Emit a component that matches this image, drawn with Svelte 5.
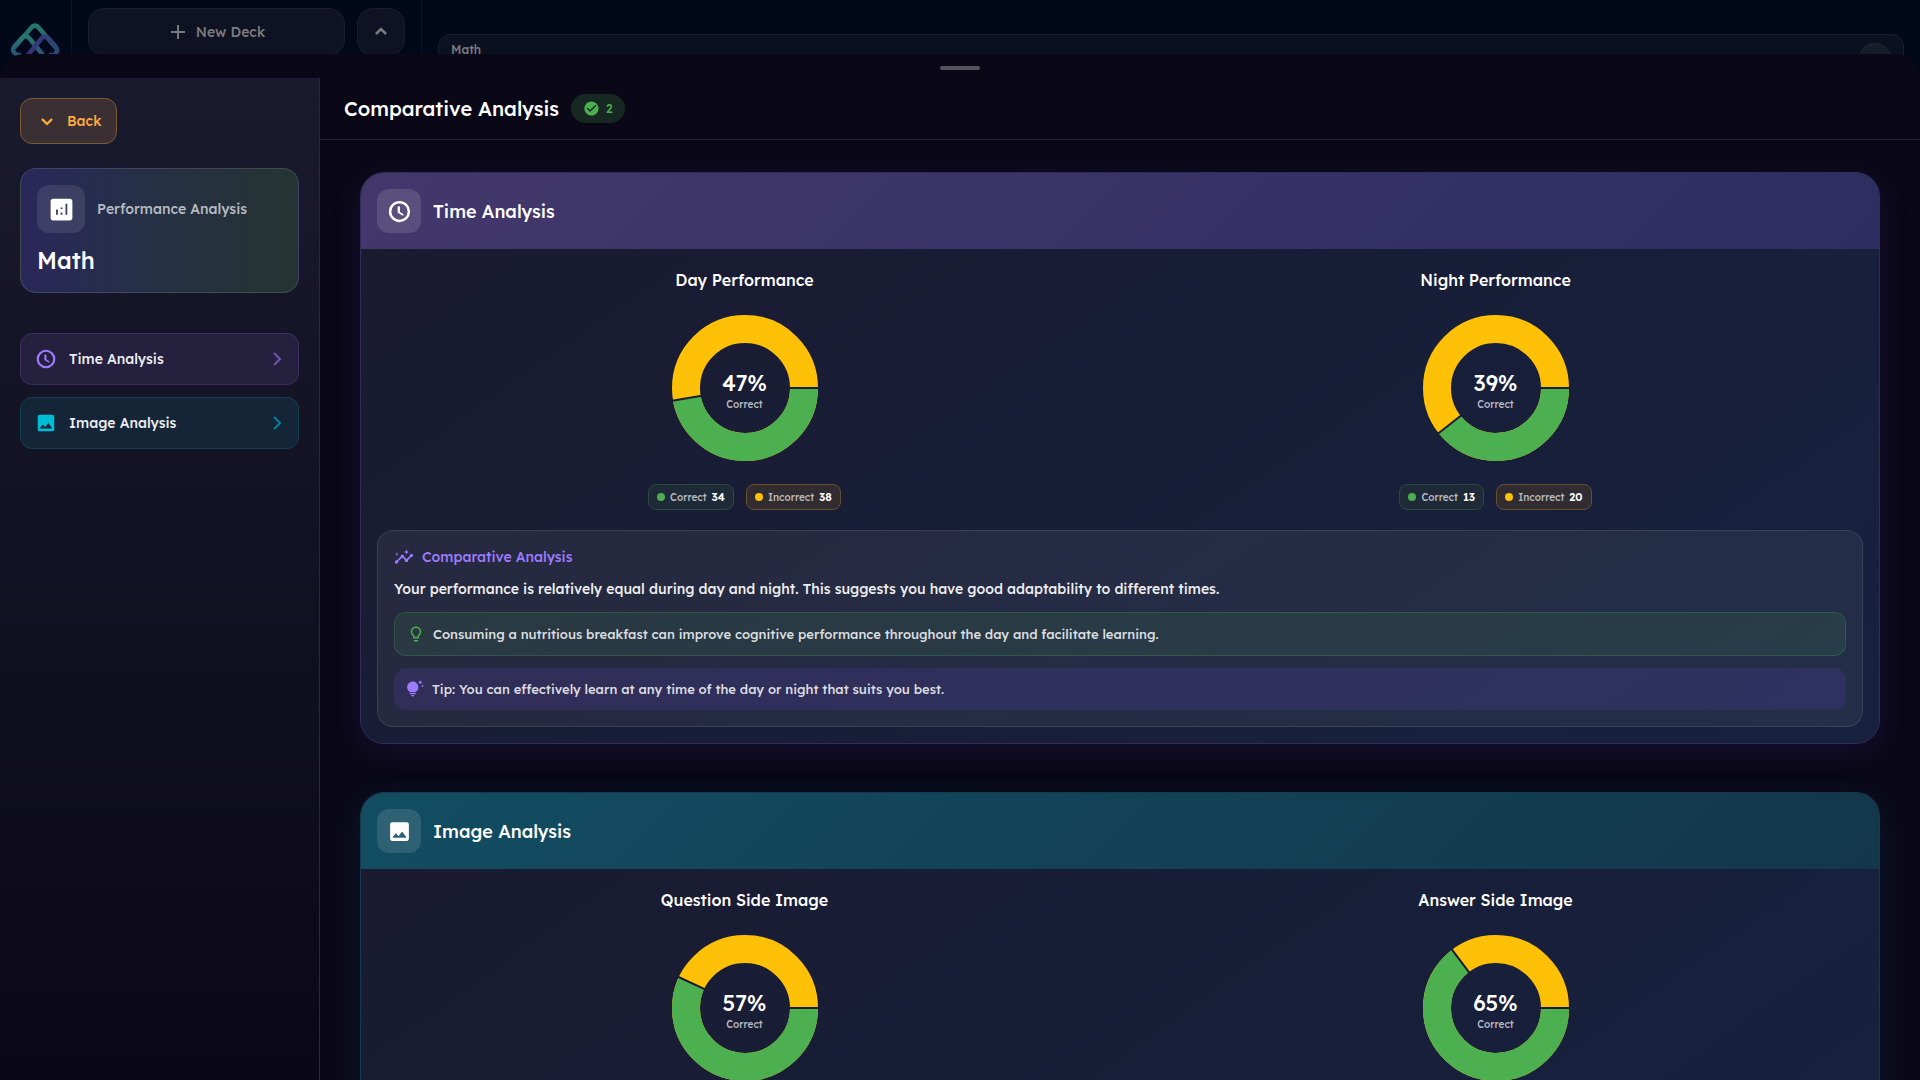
<script>
	const sections = [
		{
			id: "time",
			title: "Time Analysis",
			charts: [
				{ title: "Day Performance", correct: 34, incorrect: 38 },
				{ title: "Night Performance", correct: 13, incorrect: 20 }
			],
			summary: "Your performance is relatively equal during day and night. This suggests you have good adaptability to different times.",
			advice: "Consuming a nutritious breakfast can improve cognitive performance throughout the day and facilitate learning.",
			tip: "Tip: You can effectively learn at any time of the day or night that suits you best."
		},
		{
			id: "image",
			title: "Image Analysis",
			charts: [
				{ title: "Question Side Image", correct: 41, incorrect: 31 },
				{ title: "Answer Side Image", correct: 22, incorrect: 12 }
			]
		}
	];

	const icons = {
		time: "M12 1.8a10.2 10.2 0 1 0 0 20.4a10.2 10.2 0 1 0 0-20.4zM12 4.2a7.8 7.8 0 1 1 0 15.6a7.8 7.8 0 1 1 0-15.6zM11.8 7H11c-.4 0-.8.3-.8.8v4.7c0 .35.18.67.49.86l4.1 2.46c.34.2.88.1 1.08-.24.21-.34.1-.89-.25-1.09l-3.12-1.97V7.8c0-.5-.3-.8-.7-.8z",
		image: "M21 19V5c0-1.1-.9-2-2-2H5c-1.1 0-2 .9-2 2v14c0 1.1.9 2 2 2h14c1.1 0 2-.9 2-2zM8.9 13.98l2.1 2.53 3.1-3.99c.2-.26.6-.26.8.01l3.51 4.68c.25.33.01.8-.4.8H6.02c-.42 0-.65-.48-.39-.81L8.12 14c.19-.26.57-.27.78-.02z",
		analytics: "M19 3H5c-1.1 0-2 .9-2 2v14c0 1.1.9 2 2 2h14c1.1 0 2-.9 2-2V5c0-1.1-.9-2-2-2zM7.5 12H9v4.4H7.5zM11.3 14.4h1.5v2h-1.5zM11.3 10.3h1.5v1.2h-1.5zM15.3 7.2h1.5v9.2h-1.5z",
		check: "M12 2C6.48 2 2 6.48 2 12s4.48 10 10 10 10-4.48 10-10S17.52 2 12 2zM9.29 16.29L5.7 12.7c-.39-.39-.39-1.02 0-1.41.39-.39 1.02-.39 1.41 0L10 14.17l6.88-6.88c.39-.39 1.02-.39 1.41 0 .39.39.39 1.02 0 1.41l-7.59 7.59c-.38.39-1.02.39-1.41 0z",
		insights: "M21 8c-1.45 0-2.26 1.44-1.93 2.51l-3.55 3.56c-.3-.09-.74-.09-1.04 0l-2.55-2.55C12.27 10.45 11.46 9 10 9c-1.45 0-2.27 1.44-1.93 2.52l-4.56 4.55C2.44 15.74 1 16.55 1 18c0 1.1.9 2 2 2 1.45 0 2.26-1.44 1.93-2.51l4.55-4.56c.3.09.74.09 1.04 0l2.55 2.55C12.73 16.55 13.54 18 15 18c1.45 0 2.27-1.44 1.93-2.52l3.56-3.55C21.56 12.26 23 11.45 23 10c0-1.1-.9-2-2-2zM15 9l.94-2.07L18 6l-2.06-.93L15 3l-.92 2.07L12 6l2.08.93zM3.5 11L4 9l2-.5L4 8l-.5-2L3 8l-2 .5L3 9z",
		bulb: "M9 21c0 .55.45 1 1 1h4c.55 0 1-.45 1-1v-1H9v1zm3-19C8.14 2 5 5.14 5 9c0 2.38 1.19 4.47 3 5.74V17c0 .55.45 1 1 1h6c.55 0 1-.45 1-1v-2.26c1.81-1.27 3-3.36 3-5.74 0-3.86-3.14-7-7-7zm2.85 11.1l-.85.6V16h-4v-2.3l-.85-.6C7.8 12.16 7 10.63 7 9c0-2.76 2.24-5 5-5s5 2.24 5 5c0 1.63-.8 3.16-2.15 4.1z",
		tips: "M7 20h4c0 1.1-.9 2-2 2s-2-.9-2-2zm-2-1h8v-2H5v2zm11.5-9.5c0 3.82-2.66 5.86-3.77 6.5H5.27c-1.11-.64-3.77-2.68-3.77-6.5C1.5 5.36 4.86 2 9 2s7.5 3.36 7.5 7.5zm4.87-2.13L20 8l1.37.63L22 10l.63-1.37L24 8l-1.37-.63L22 6l-.63 1.37zM19 6l.94-2.06L22 3l-2.06-.94L19 0l-.94 2.06L16 3l2.06.94L19 6z"
	};

	const radius = 59;
	const length = 2 * Math.PI * radius;

	function share(chart) {
		return chart.correct / (chart.correct + chart.incorrect);
	}

	function edge(chart, r) {
		const angle = share(chart) * 2 * Math.PI;
		return { x: 74 + r * Math.cos(angle), y: 74 + r * Math.sin(angle) };
	}
</script>

{#snippet icon(name, size)}
	<svg class="icon" width={size} height={size} viewBox="0 0 24 24" aria-hidden="true">
		<path d={icons[name]} fill="currentColor" fill-rule="evenodd" />
	</svg>
{/snippet}

<div class="app">
	<div class="backdrop">
		<div class="rail">
			<svg class="logo" width="50" height="40" viewBox="0 0 50 40" fill="none" stroke-width="4.5" stroke-linejoin="round" aria-hidden="true">
				<defs>
					<linearGradient id="logo-left" x1="0" y1="0" x2="0" y2="1">
						<stop offset="0" stop-color="#24786e" />
						<stop offset="1" stop-color="#2a5274" />
					</linearGradient>
					<linearGradient id="logo-right" x1="0" y1="0" x2="1" y2="0">
						<stop offset="0" stop-color="#3a2f7c" />
						<stop offset="1" stop-color="#2a4a72" />
					</linearGradient>
				</defs>
				<path d="M4 26L21 6Q25 1 29 6L46 26" stroke="url(#logo-left)" />
				<path d="M11 33H7Q1 29 4 25L12 16Q16 12 20 17L33 33" stroke="url(#logo-left)" />
				<path d="M18 33L31 17Q35 12 39 17L46 25Q49 29 44 33H39" stroke="url(#logo-right)" />
			</svg>
		</div>
		<div class="decks">
			<button class="ghost new-deck">
				<svg width="20" height="20" viewBox="0 0 20 20" aria-hidden="true"><path d="M10 3v14M3 10h14" stroke="currentColor" stroke-width="2" /></svg>
				New Deck
			</button>
			<button class="ghost collapse" aria-label="Collapse">
				<svg width="14" height="14" viewBox="0 0 14 14" aria-hidden="true"><path d="M2 9l5-5 5 5" fill="none" stroke="currentColor" stroke-width="2.5" /></svg>
			</button>
		</div>
		<div class="deck-area">
			<div class="deck-card">
				<span>Math</span>
				<button class="round" aria-label="Deck options"></button>
			</div>
		</div>
	</div>

	<div class="sheet">
		<div class="handle"><span></span></div>

		<div class="columns">
			<aside>
				<button class="back">
					<svg width="14" height="14" viewBox="0 0 14 14" aria-hidden="true"><path d="M2 5l5 5 5-5" fill="none" stroke="currentColor" stroke-width="2.4" stroke-linejoin="round" /></svg>
					Back
				</button>

				<div class="deck-info">
					<div class="deck-label">
						<span class="deck-icon">{@render icon("analytics", 29)}</span>
						Performance Analysis
					</div>
					<h1>Math</h1>
				</div>

				<nav>
					{#each sections as section}
						<a class="nav-item {section.id}" href="#{section.id}">
							{@render icon(section.id, 22)}
							<span>{section.title}</span>
							<svg class="arrow" width="14" height="14" viewBox="0 0 14 14" aria-hidden="true"><path d="M4 1l6 6-6 6" fill="none" stroke="currentColor" stroke-width="2" /></svg>
						</a>
					{/each}
				</nav>
			</aside>

			<main>
				<header>
					<h2>Comparative Analysis</h2>
					<span class="count">{@render icon("check", 17)} 2</span>
				</header>

				<div class="content">
					{#each sections as section}
						<section class="card {section.id}" id={section.id}>
							<div class="card-head">
								<span class="head-icon">{@render icon(section.id, 25)}</span>
								<h3>{section.title}</h3>
							</div>
							<div class="card-body">
								<div class="charts">
									{#each section.charts as chart}
										{@const inner = edge(chart, 44)}
										{@const outer = edge(chart, 74)}
										<div class="chart">
											<h4>{chart.title}</h4>
											<div class="donut">
												<svg width="148" height="148" viewBox="0 0 148 148" fill="none" aria-hidden="true">
													<circle cx="74" cy="74" r={radius} stroke="#ffc107" stroke-width="28" />
													<circle cx="74" cy="74" r={radius} stroke="#4caf50" stroke-width="28" stroke-dasharray="{share(chart) * length} {length}" />
													<path d="M118 74H148M{inner.x} {inner.y}L{outer.x} {outer.y}" stroke="#191d34" stroke-width="2" />
												</svg>
												<div class="donut-label">
													<strong>{Math.round(share(chart) * 100)}%</strong>
													<span>Correct</span>
												</div>
											</div>
											<!-- the second section's legend starts below the fold -->
											{#if section.summary}
												<div class="legend">
													<span class="pill correct"><i></i>Correct <b>{chart.correct}</b></span>
													<span class="pill incorrect"><i></i>Incorrect <b>{chart.incorrect}</b></span>
												</div>
											{/if}
										</div>
									{/each}
								</div>

								{#if section.summary}
									<div class="analysis">
										<h5>{@render icon("insights", 20)} Comparative Analysis</h5>
										<p class="summary">{section.summary}</p>
										<p class="advice">{@render icon("bulb", 18)} {section.advice}</p>
										<p class="tip">{@render icon("tips", 18)} {section.tip}</p>
									</div>
								{/if}
							</div>
						</section>
					{/each}
				</div>
			</main>
		</div>
	</div>
</div>

<style>
	:global(body) {
		background: #00081a;
	}

	.app {
		height: 100vh;
		display: flex;
		flex-direction: column;
		overflow: hidden;
		background: #00081a;
		color: #fff;
		font-family: Lexend, Inter, "Open Sans", sans-serif;
		font-weight: 500;
	}

	.app :is(h1, h2, h3, h4, h5, p) {
		margin: 0;
		font-weight: 500;
	}

	.app button {
		font: inherit;
		cursor: pointer;
	}

	.icon {
		flex: none;
		display: block;
	}

	/* Dimmed page behind the sheet */
	.backdrop {
		flex: none;
		height: 54px;
		display: flex;
		color: #7b7b7d;
	}

	.rail {
		box-sizing: border-box;
		width: 72px;
		padding: 22px 0 0 10px;
		border-right: 1px solid #0d1424;
	}

	.logo {
		display: block;
	}

	.decks {
		box-sizing: border-box;
		width: 350px;
		padding: 8px 16px 0;
		display: flex;
		align-items: flex-start;
		gap: 12px;
		border-right: 1px solid #0d1424;
	}

	.ghost {
		box-sizing: border-box;
		height: 48px;
		padding: 0;
		display: flex;
		align-items: center;
		justify-content: center;
		gap: 8px;
		border: 1px solid #191e2c;
		border-radius: 16px;
		background: #0e1222;
		color: inherit;
	}

	.app .new-deck {
		flex: 1;
		font-size: 14px;
	}

	.collapse {
		width: 48px;
	}

	.deck-area {
		flex: 1;
		padding: 34px 16px 0;
	}

	.deck-card {
		box-sizing: border-box;
		height: 60px;
		padding: 8px 12px;
		display: flex;
		justify-content: space-between;
		border: 1px solid #191e2c;
		border-radius: 12px;
		background: #0c1122;
		font-size: 12px;
		line-height: 14px;
	}

	.round {
		width: 32px;
		height: 32px;
		border: 1px solid #252a35;
		border-radius: 50%;
		background: #171c2a;
	}

	.sheet {
		position: relative;
		flex: 1;
		min-height: 0;
		display: flex;
		flex-direction: column;
		border-radius: 24px 24px 0 0;
		background: #0a0817;
	}

	.handle {
		flex: none;
		height: 24px;
		display: flex;
		align-items: center;
		justify-content: center;
	}

	.handle span {
		width: 40px;
		height: 4px;
		margin-top: 4px;
		border-radius: 2px;
		background: #545359;
	}

	.columns {
		flex: 1;
		min-height: 0;
		display: flex;
	}

	aside {
		box-sizing: border-box;
		flex: none;
		width: 320px;
		padding: 20px;
		border-right: 1px solid #2a2938;
		background: linear-gradient(180deg, #1a1a2e, #0a0817);
	}

	.back {
		height: 46px;
		padding: 0 15px 0 19px;
		display: flex;
		align-items: center;
		gap: 13px;
		border: 1px solid #7c5a34;
		border-radius: 12px;
		background: #3a2f32;
		color: #ffab40;
	}

	.app .back {
		font-size: 14px;
	}

	.deck-info {
		margin-top: 24px;
		padding: 16px;
		border: 1px solid rgba(255, 255, 255, 0.12);
		border-radius: 16px;
		background: linear-gradient(90deg, #2a275a, #252f48 40%, #243431);
	}

	.deck-label {
		display: flex;
		align-items: center;
		gap: 12px;
		color: #b7bac1;
		font-size: 14px;
	}

	.deck-icon {
		width: 48px;
		height: 48px;
		display: grid;
		place-items: center;
		border-radius: 12px;
		background: rgba(255, 255, 255, 0.1);
		color: #fff;
	}

	.app h1 {
		margin-top: 12px;
		font-size: 23px;
		line-height: 31px;
	}

	nav {
		margin-top: 40px;
		display: grid;
		gap: 12px;
	}

	.nav-item {
		height: 50px;
		padding: 0 14px;
		display: flex;
		align-items: center;
		gap: 12px;
		border: 1px solid;
		border-radius: 12px;
		font-size: 14px;
		text-decoration: none;
	}

	.nav-item span {
		flex: 1;
		color: #ededf0;
	}

	.nav-item.time {
		border-color: #3a3062;
		background: #25203e;
		color: #9c7bff;
	}

	.nav-item.image {
		border-color: #104251;
		background: #142538;
		color: #00bcd4;
	}

	.arrow {
		opacity: 0.6;
	}

	main {
		flex: 1;
		min-width: 0;
		display: flex;
		flex-direction: column;
	}

	header {
		box-sizing: border-box;
		flex: none;
		height: 62px;
		padding: 0 24px;
		display: flex;
		align-items: center;
		gap: 12px;
		border-bottom: 1px solid #232230;
	}

	.app h2 {
		font-size: 20px;
	}

	.count {
		height: 29px;
		padding: 0 12px;
		display: flex;
		align-items: center;
		gap: 6px;
		border-radius: 16px;
		background: #172822;
		color: #4caf50;
		font-size: 12px;
	}

	.content {
		flex: 1;
		min-height: 0;
		padding: 32px 40px 0;
		overflow: hidden;
		display: flex;
		flex-direction: column;
		gap: 48px;
	}

	.card {
		flex: none;
		border: 1px solid;
		border-radius: 24px;
		background: linear-gradient(145deg, #1a1a2e, #181e38 50%, #16213e);
	}

	.card.time {
		border-color: #322c5b;
		box-shadow: 0 8px 32px rgba(124, 77, 255, 0.1);
	}

	.card.image {
		border-color: #17394f;
		box-shadow: 0 8px 32px rgba(0, 188, 212, 0.1);
	}

	.card-head {
		padding: 16px;
		display: flex;
		align-items: center;
		gap: 12px;
		border-radius: 23px 23px 0 0;
	}

	.time .card-head {
		background: linear-gradient(135deg, #43386c, #2d2d62);
	}

	.image .card-head {
		background: linear-gradient(135deg, #124d62, #13364a);
	}

	.head-icon {
		width: 44px;
		height: 44px;
		display: grid;
		place-items: center;
		border-radius: 12px;
		background: rgba(255, 255, 255, 0.12);
	}

	.app h3 {
		font-size: 18px;
	}

	.card-body {
		padding: 16px;
	}

	.charts {
		display: grid;
		grid-template-columns: 1fr 1fr;
		gap: 16px;
	}

	.chart {
		display: flex;
		flex-direction: column;
		align-items: center;
	}

	.app h4 {
		font-size: 16px;
		line-height: 30px;
	}

	.donut {
		position: relative;
		width: 148px;
		height: 148px;
		margin: 19px 0 22px;
	}

	.donut svg {
		display: block;
	}

	.donut-label {
		position: absolute;
		inset: 0;
		padding-top: 4px;
		display: flex;
		flex-direction: column;
		align-items: center;
		justify-content: center;
		gap: 1px;
	}

	.donut-label strong {
		font-size: 22px;
		line-height: 28px;
		font-weight: 500;
	}

	.donut-label span {
		color: #b9b9c1;
		font-size: 10px;
		line-height: 14px;
	}

	.legend {
		display: flex;
		gap: 12px;
	}

	.pill {
		height: 24px;
		padding: 0 8px;
		display: flex;
		align-items: center;
		gap: 5px;
		border: 1px solid;
		border-radius: 8px;
		color: #b9bcc1;
		font-size: 10px;
	}

	.pill i {
		width: 8px;
		height: 8px;
		border-radius: 50%;
	}

	.pill b {
		color: #fff;
		font-size: 11px;
		font-weight: 600;
	}

	.pill.correct {
		border-color: #284a3f;
		background: #1f2a38;
	}

	.pill.correct i {
		background: #4caf50;
	}

	.pill.incorrect {
		border-color: #675028;
		background: #312c32;
	}

	.pill.incorrect i {
		background: #ffc107;
	}

	.analysis {
		margin-top: 20px;
		padding: 16px;
		border: 1px solid rgba(255, 255, 255, 0.1);
		border-radius: 16px;
		background: rgba(255, 255, 255, 0.06);
	}

	.app h5 {
		display: flex;
		align-items: center;
		gap: 8px;
		color: #9c7bff;
		font-size: 14px;
		line-height: 20px;
	}

	.summary {
		padding: 10px 0;
		color: #ededf0;
		font-size: 14px;
		line-height: 25px;
	}

	.advice,
	.tip {
		display: flex;
		align-items: center;
		gap: 8px;
		padding: 11px 12px;
		border-radius: 12px;
		color: #dcdde0;
		font-size: 13px;
		line-height: 20px;
	}

	.advice {
		border: 1px solid rgba(76, 175, 80, 0.25);
		background: rgba(76, 175, 80, 0.12);
	}

	.app .tip {
		margin-top: 12px;
		background: rgba(124, 77, 255, 0.13);
	}

	.advice .icon {
		color: #4caf50;
	}

	.tip .icon {
		color: #9c7bff;
	}
</style>
